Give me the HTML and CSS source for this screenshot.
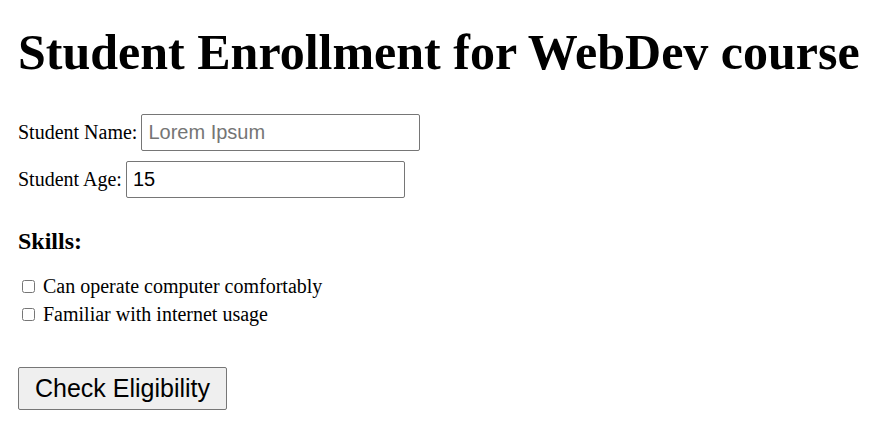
FILE: index.html
```html
<!DOCTYPE html>
<html>
<head>
<meta charset="utf-8">
<link rel="stylesheet" href="styles.css">
</head>
<body>
<h1 class="title">Student Enrollment for WebDev course</h1>
<form class="form">
  <div class="row"><label class="lbl" for="name">Student Name:</label><input class="field" id="name" type="text" placeholder="Lorem Ipsum"></div>
  <div class="row"><label class="lbl" for="age">Student Age:</label><input class="field" id="age" type="text" value="15"></div>
  <h3 class="skills">Skills:</h3>
  <div class="check"><input type="checkbox" id="c1"> <label for="c1">Can operate computer comfortably</label></div>
  <div class="check"><input type="checkbox" id="c2"> <label for="c2">Familiar with internet usage</label></div>
  <button class="btn" type="button">Check Eligibility</button>
</form>
</body>
</html>
```
FILE: styles.css
```css
body {
  margin: 0;
  padding: 0 18px;
  font-family: "Liberation Serif", serif;
  font-size: 20px;
  color: #000;
  background: #fff;
}
.title {
  font-size: 50px;
  font-weight: bold;
  margin: 23px 0 33px;
}
.row {
  margin-bottom: 10px;
}
.lbl {
  margin-right: 4px;
}
.field {
  font-family: "Liberation Sans", Arial, sans-serif;
  font-size: 20px;
  width: 279px;
  box-sizing: border-box;
  padding: 6px;
  border: 1px solid #767676;
  border-radius: 2px;
}
.field::placeholder {
  color: #757575;
}
.skills {
  font-size: 24px;
  margin: 30px 0 17px;
}
.check {
  line-height: 28px;
}
.btn {
  margin-top: 39px;
  font-family: "Liberation Sans", Arial, sans-serif;
  font-size: 25px;
  padding: 6px 16px;
  border: 1px solid #767676;
  border-radius: 2px;
  background: #efefef;
}
```
